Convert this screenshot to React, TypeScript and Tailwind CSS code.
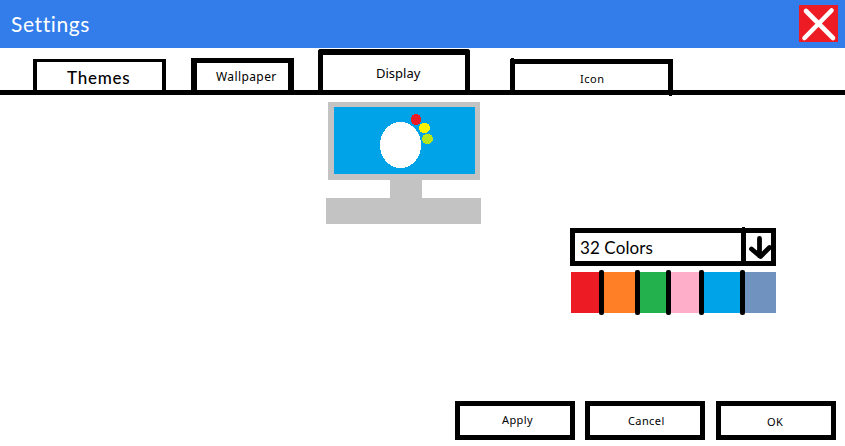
import React from 'react';

const swatches = [
  'w-[28px] bg-[#ed1c24]',
  'w-[31px] bg-[#ff7f27]',
  'w-[26px] bg-[#22b14c]',
  'w-[28px] bg-[#ffaec9]',
  'w-[36px] bg-[#00a2e8]',
  'w-[31px] bg-[#7092be]',
];

function ActionButton({ label, className }: { label: string; className: string }) {
  return (
    <button className={`h-[39px] w-[120px] border-[5px] border-black text-left text-[11px] leading-[16px] tracking-[0.4px] ${className}`}>
      <span className="block">{label}</span>
    </button>
  );
}

export default function App() {
  return (
    <div className="flex h-[446px] w-[845px] flex-col overflow-hidden bg-white font-['Noto_Sans','Open_Sans',sans-serif] text-black">
      <header className="flex h-12 shrink-0 justify-between bg-[#337deb] pr-[7px]">
        <h1 className="pt-[10px] pl-[11px] font-[Lato,sans-serif] text-[21px] leading-[28px] tracking-[0.6px] text-white">Settings</h1>
        <button aria-label="Close" className="mt-[5px] h-[37px] w-[39px] bg-[#ed1c24]">
          <svg viewBox="0 0 39 37" className="h-full w-full" fill="none" stroke="white" strokeWidth="4.6" strokeLinecap="round">
            <path d="M7 6L34 33M32.5 5.5L5.5 33" />
          </svg>
        </button>
      </header>

      <nav className="flex h-[47px] shrink-0 items-end border-b-[5px] border-black pl-[33px]">
        <button className="flex h-[31px] w-[133px] items-start border-x-4 border-t-[3px] border-black pt-[5px] pl-[30px] text-left font-[Lato,sans-serif] text-[17px] leading-[22px] font-medium tracking-[0.75px]">Themes</button>
        <button className="ml-[25px] flex h-[32px] w-[103px] items-start border-x-[6px] border-t-[5px] border-black pt-[6px] pl-[19px] text-left text-[12px] leading-[16px] tracking-[0.4px]">Wallpaper</button>
        <button className="ml-[24px] flex h-[41px] w-[152px] items-start rounded-t-[3px] border-x-[5px] border-t-[6px] border-black pt-[9px] pl-[53px] text-left text-[13px] leading-[18px]">Display</button>
        <button className="relative ml-[40px] flex h-[31px] w-[163px] items-start border-x-[5px] border-t-[5px] border-black pt-[7px] pl-[65px] text-left text-[11px] leading-[16px] tracking-[0.5px]">
          Icon
          <span className="absolute top-[-6px] left-[-4px] h-1 w-[3px] bg-black" />
          <span className="absolute right-[-4px] bottom-[-6px] h-[6px] w-[3px] bg-black" />
        </button>
      </nav>

      <main className="flex h-[351px] flex-col">
        <div className="ml-[326px] flex h-[129px] w-[155px] flex-col items-center pt-[7px]">
          <div className="h-[78px] w-[152px] shrink-0 border-t-[5px] border-r-[5px] border-b-[6px] border-l-[6px] border-[#c3c3c3] bg-[#00a2e8]">
            <svg viewBox="334 107 141 67" className="h-[67px] w-[141px]" shapeRendering="crispEdges">
              <ellipse cx="400.5" cy="145" rx="20.5" ry="23" fill="white" />
              <ellipse cx="416" cy="119.5" rx="5.3" ry="5.5" fill="#ed1c24" />
              <ellipse cx="424.5" cy="128" rx="5.5" ry="5.2" fill="#fff200" />
              <ellipse cx="427.5" cy="139" rx="5.5" ry="5.2" fill="#b5e61d" />
            </svg>
          </div>
          <div className="ml-[5px] h-[18px] w-[32px] shrink-0 bg-[#c3c3c3]" />
          <div className="h-[26px] w-full shrink-0 bg-[#c3c3c3]" />
        </div>

        <section className="mt-[4px] ml-[570px] w-[206px]">
          <button className="relative flex h-[38px] w-[206px] border-[5px] border-black text-left">
            <span className="w-[166px] shrink-0 pt-[4px] pl-[5px] font-[Lato,sans-serif] text-[17px] leading-[22px] tracking-[0.1px]">32 Colors</span>
            <span className="h-[28px] w-[5px] shrink-0 bg-black" />
            <svg viewBox="746 233 25 28" className="h-[28px] w-[25px] shrink-0 overflow-visible" fill="none" stroke="black" strokeWidth="4.8" strokeLinecap="round" strokeLinejoin="round">
              <path d="M759.5 238.5V256M751.5 249L760.5 256.5L769.5 247.5" />
            </svg>
            <span className="absolute top-[-6px] left-[167px] h-1 w-[3px] bg-black" />
          </button>
          <div className="mt-[4px] ml-px flex h-[45px] w-[205px] items-center">
            {swatches.map((swatch, index) => (
              <React.Fragment key={swatch}>
                {index > 0 && <span className="h-[45px] w-[5px] shrink-0 rounded-[2px] bg-black" />}
                <span className={`h-[41px] shrink-0 ${swatch}`} />
              </React.Fragment>
            ))}
          </div>
        </section>

        <footer className="mt-[86px] ml-[455px] flex">
          <ActionButton label="Apply" className="pb-[2px] pl-[42px]" />
          <ActionButton label="Cancel" className="ml-[10px] pl-[38px]" />
          <ActionButton label="OK" className="ml-[11px] pt-[2px] pl-[46px]" />
        </footer>
      </main>
    </div>
  );
}
